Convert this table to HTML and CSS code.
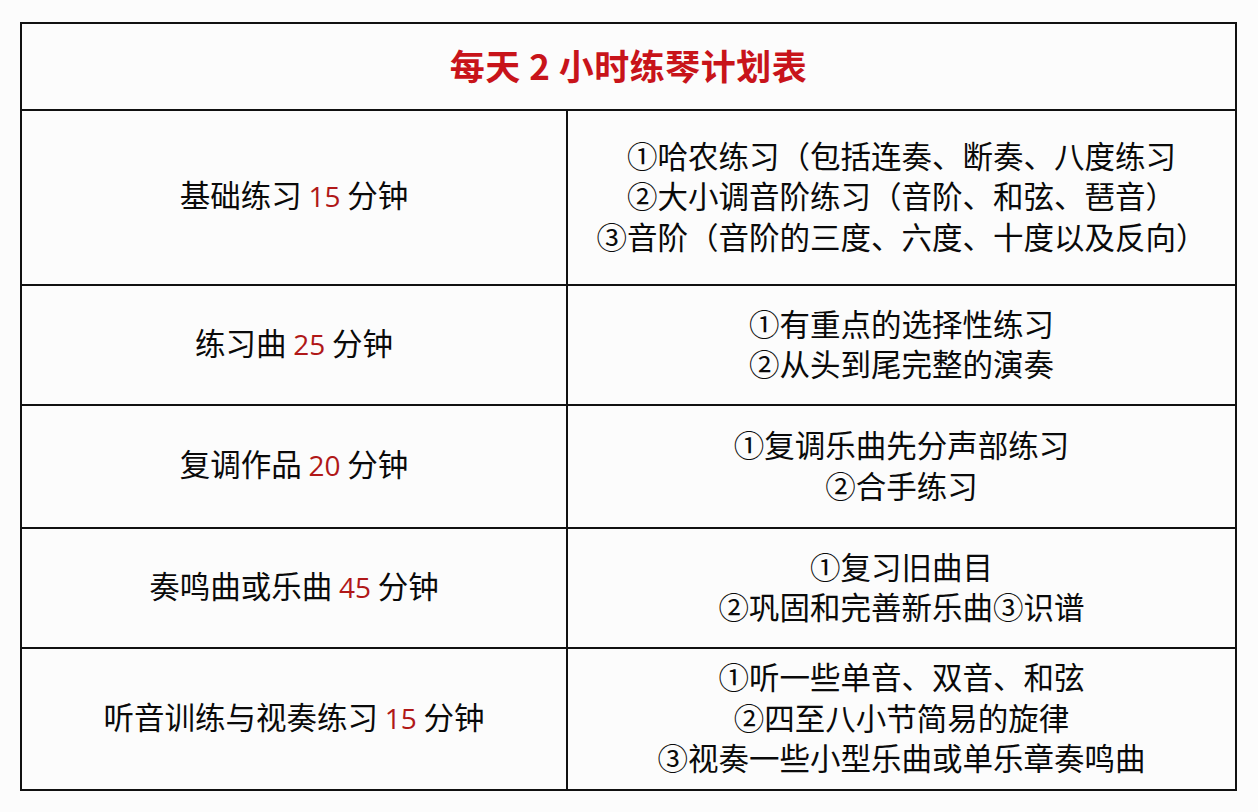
FILE: index.html
```html
<!DOCTYPE html>
<html lang="zh-CN">
<head>
<meta charset="utf-8">
<title>每天2小时练琴计划表</title>
<link rel="stylesheet" href="styles.css">
</head>
<body>
<table class="plan">
  <colgroup>
    <col class="col-left">
    <col class="col-right">
  </colgroup>
  <tr class="row-head">
    <th colspan="2" class="title">每天 2 小时练琴计划表</th>
  </tr>
  <tr class="row-1">
    <td class="item">基础练习 <span class="num">15</span> 分钟</td>
    <td class="detail">①哈农练习（包括连奏、断奏、八度练习<br>②大小调音阶练习（音阶、和弦、琶音）<br>③音阶（音阶的三度、六度、十度以及反向）</td>
  </tr>
  <tr class="row-2">
    <td class="item">练习曲 <span class="num">25</span> 分钟</td>
    <td class="detail">①有重点的选择性练习<br>②从头到尾完整的演奏</td>
  </tr>
  <tr class="row-3">
    <td class="item">复调作品 <span class="num">20</span> 分钟</td>
    <td class="detail">①复调乐曲先分声部练习<br>②合手练习</td>
  </tr>
  <tr class="row-4">
    <td class="item">奏鸣曲或乐曲 <span class="num">45</span> 分钟</td>
    <td class="detail">①复习旧曲目<br>②巩固和完善新乐曲③识谱</td>
  </tr>
  <tr class="row-5">
    <td class="item">听音训练与视奏练习 <span class="num">15</span> 分钟</td>
    <td class="detail">①听一些单音、双音、和弦<br>②四至八小节简易的旋律<br>③视奏一些小型乐曲或单乐章奏鸣曲</td>
  </tr>
</table>
</body>
</html>
```

FILE: styles.css
```css
html, body {
  margin: 0;
  padding: 0;
  background: #fcfcfc;
}

body {
  padding: 22px 0 0 20px;
  font-family: "Noto Sans CJK SC", "Noto Sans", sans-serif;
  color: #0a0a0a;
}

.plan {
  border-collapse: collapse;
  width: 1215px;
  table-layout: fixed;
}

.col-left { width: 546px; }
.col-right { width: 669px; }

.plan th,
.plan td {
  border: 2px solid #111;
  padding: 0 0 4px 0;
  text-align: center;
  vertical-align: middle;
}

.title {
  font-size: 35px;
  font-weight: 700;
  color: #c8141a;
  line-height: 40px;
  letter-spacing: 0.5px;
}

.item {
  font-size: 30.5px;
  line-height: 41px;
  font-weight: 400;
}

.num {
  color: #b01818;
  font-family: "Open Sans", "Noto Sans", sans-serif;
  font-size: 28px;
}

.detail {
  font-size: 30.5px;
  line-height: 40.5px;
  font-weight: 400;
}

.row-head { height: 87px; }
.row-1 { height: 175px; }
.row-2 { height: 120px; }
.row-3 { height: 123px; }
.row-4 { height: 120px; }
.row-5 { height: 142px; }
```
